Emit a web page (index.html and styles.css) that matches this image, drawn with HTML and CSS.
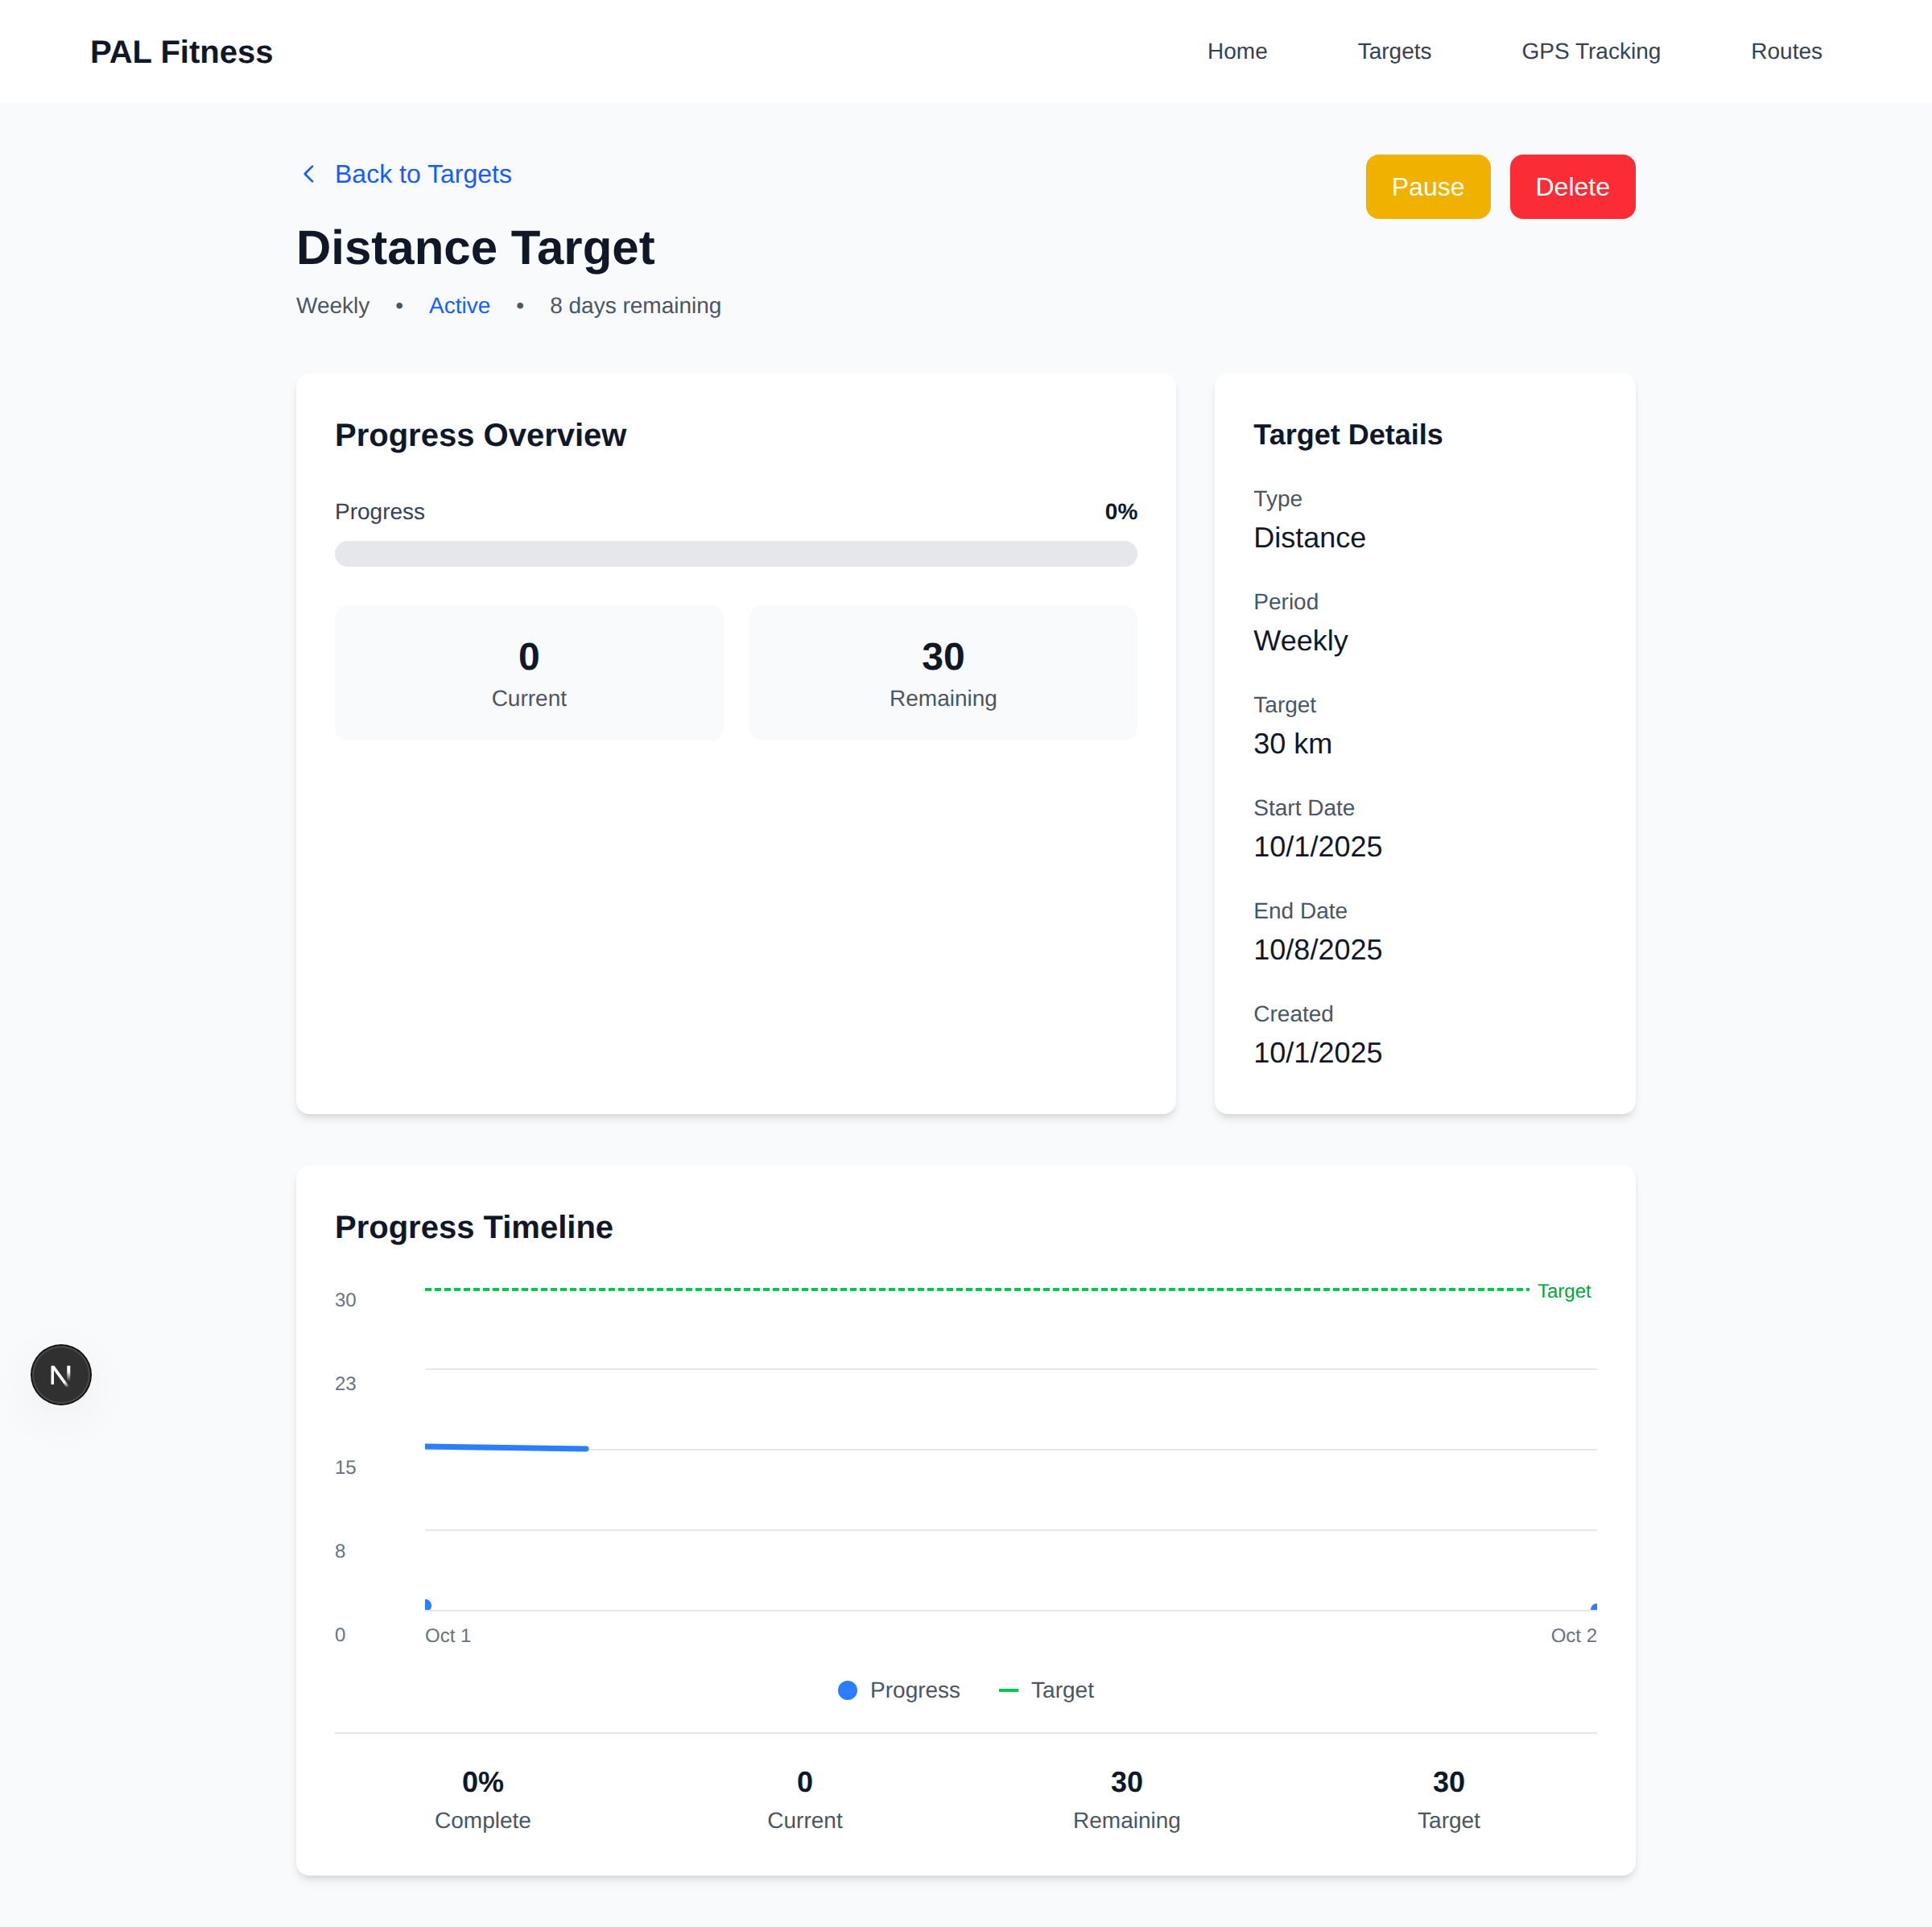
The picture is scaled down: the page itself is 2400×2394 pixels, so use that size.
FILE: index.html
```html
<!DOCTYPE html>
<html lang="en">
<head>
<meta charset="utf-8">
<title>PAL Fitness</title>
<link rel="stylesheet" href="styles.css">
</head>
<body>
<nav class="nav">
  <div class="logo">PAL Fitness</div>
  <div class="nav-links">
    <a class="nav-link">Home</a>
    <a class="nav-link">Targets</a>
    <a class="nav-link">GPS Tracking</a>
    <a class="nav-link">Routes</a>
  </div>
</nav>
<main class="main">
  <header class="page-head">
    <div>
      <a class="back">
        <svg class="back-icon" viewBox="0 0 24 24" fill="none" stroke="currentColor" stroke-width="2" stroke-linecap="round" stroke-linejoin="round"><path d="M15 19l-7-7 7-7"/></svg>
        <span>Back to Targets</span>
      </a>
      <h1 class="title">Distance Target</h1>
      <div class="meta">
        <span>Weekly</span><span>•</span><span class="meta-active">Active</span><span>•</span><span>8 days remaining</span>
      </div>
    </div>
    <div class="actions">
      <button class="btn btn-pause">Pause</button>
      <button class="btn btn-delete">Delete</button>
    </div>
  </header>

  <div class="top-grid">
    <section class="card card-wide">
      <h2 class="card-title">Progress Overview</h2>
      <div class="progress-row">
        <span class="progress-label">Progress</span>
        <span class="progress-value">0%</span>
      </div>
      <div class="bar"></div>
      <div class="boxes">
        <div class="box"><div class="box-value">0</div><div class="box-label">Current</div></div>
        <div class="box"><div class="box-value">30</div><div class="box-label">Remaining</div></div>
      </div>
    </section>
    <aside class="card">
      <h2 class="card-title card-title-sm">Target Details</h2>
      <dl class="details">
        <div><dt>Type</dt><dd>Distance</dd></div>
        <div><dt>Period</dt><dd>Weekly</dd></div>
        <div><dt>Target</dt><dd>30 km</dd></div>
        <div><dt>Start Date</dt><dd>10/1/2025</dd></div>
        <div><dt>End Date</dt><dd>10/8/2025</dd></div>
        <div><dt>Created</dt><dd>10/1/2025</dd></div>
      </dl>
    </aside>
  </div>

  <section class="card timeline">
    <h2 class="card-title">Progress Timeline</h2>
    <div class="chart">
      <div class="y-axis"><span>30</span><span>23</span><span>15</span><span>8</span><span>0</span></div>
      <div class="plot">
        <svg class="plot-svg" width="1456" height="432" viewBox="0 0 1456 432">
          <g stroke="#e5e7eb" stroke-width="2">
            <line x1="0" y1="18" x2="1372" y2="18"/>
            <line x1="0" y1="117" x2="1456" y2="117"/>
            <line x1="0" y1="217" x2="1456" y2="217"/>
            <line x1="0" y1="317" x2="1456" y2="317"/>
            <line x1="0" y1="417" x2="1456" y2="417"/>
          </g>
          <line x1="0" y1="18" x2="1372" y2="18" stroke="#00c950" stroke-width="4" stroke-dasharray="8 4"/>
          <text class="target-tag" x="1382" y="28">Target</text>
          <path d="M0 213L200 216" stroke="#2b7fff" stroke-width="7" stroke-linecap="round" fill="none"/>
          <path d="M0 402.700A8 8 0 0 1 6 416H0Z" fill="#2b7fff"/>
          <path d="M1456 408A8 8 0 0 0 1448 416H1456Z" fill="#2b7fff"/>
        </svg>
        <div class="x-axis"><span>Oct 1</span><span>Oct 2</span></div>
      </div>
    </div>
    <div class="legend">
      <div class="legend-item"><span class="legend-dot"></span><span>Progress</span></div>
      <div class="legend-item"><span class="legend-line"></span><span>Target</span></div>
    </div>
    <div class="summary">
      <div class="summary-item"><div class="summary-value">0%</div><div class="summary-label">Complete</div></div>
      <div class="summary-item"><div class="summary-value">0</div><div class="summary-label">Current</div></div>
      <div class="summary-item"><div class="summary-value">30</div><div class="summary-label">Remaining</div></div>
      <div class="summary-item"><div class="summary-value">30</div><div class="summary-label">Target</div></div>
    </div>
  </section>
</main>
<div class="dev-badge">
  <svg width="36" height="36" viewBox="0 0 36 36" fill="none">
    <defs>
      <linearGradient id="nDiag" x1="6" y1="7" x2="28" y2="33" gradientUnits="userSpaceOnUse">
        <stop offset="0" stop-color="#fff"/><stop offset=".75" stop-color="#fff"/><stop offset="1" stop-color="#fff" stop-opacity="0"/>
      </linearGradient>
      <linearGradient id="nStem" x1="27" y1="7" x2="27" y2="26" gradientUnits="userSpaceOnUse">
        <stop offset="0" stop-color="#fff"/><stop offset=".35" stop-color="#fff"/><stop offset="1" stop-color="#fff" stop-opacity="0"/>
      </linearGradient>
    </defs>
    <path d="M5.500 6.700H9.500L28.500 33H24L9 12.500V30H5.500Z" fill="url(#nDiag)"/>
    <rect x="25.300" y="6.700" width="4" height="19.300" fill="url(#nStem)"/>
  </svg>
</div>
</body>
</html>
```
FILE: styles.css
```css
* { box-sizing: border-box; }
html, body { margin: 0; padding: 0; }
body {
  background: #f9fafb;
  color: #101828;
  font-family: "Liberation Sans", Arial, sans-serif;
  min-height: 2394px;
  position: relative;
  text-rendering: geometricPrecision;
}
h1, h2, dl, dd { margin: 0; }

.nav {
  height: 128px;
  background: #fff;
  display: flex;
  align-items: center;
  justify-content: space-between;
  padding: 0 136px 0 112px;
}
.logo { font-size: 40px; line-height: 56px; font-weight: 700; padding-top: 2px; }
.nav-links { display: flex; gap: 112px; }
.nav-link { font-size: 28px; line-height: 40px; color: #364153; }

.main { width: 1664px; margin: 0 auto; padding: 64px 0; }

.page-head { display: flex; justify-content: space-between; align-items: flex-start; margin-bottom: 64px; }
.back { display: flex; align-items: center; gap: 16px; font-size: 32px; line-height: 48px; color: #155dfc; }
.back-icon { width: 32px; height: 32px; }
.title { font-size: 60px; line-height: 72px; font-weight: 700; margin-top: 32px; }
.meta { display: flex; gap: 32px; font-size: 28px; line-height: 40px; color: #4a5565; margin-top: 16px; }
.meta-active { color: #155dfc; }
.actions { display: flex; gap: 24px; }
.btn {
  border: 0;
  border-radius: 16px;
  color: #fff;
  font: 400 32px/48px "Liberation Sans", Arial, sans-serif;
  padding: 16px 32px;
}
.btn-pause { background: #f0b100; }
.btn-delete { background: #fb2c36; }

.card {
  background: #fff;
  border-radius: 16px;
  padding: 48px;
  box-shadow: 0 8px 12px -2px rgba(0,0,0,.1), 0 4px 8px -4px rgba(0,0,0,.1);
}
.top-grid { display: grid; grid-template-columns: repeat(3, minmax(0, 1fr)); gap: 48px; }
.card-wide { grid-column: span 2; }
.card-title { font-size: 40px; line-height: 56px; font-weight: 700; padding-top: 1px; margin-bottom: -1px; }
.card-title-sm { font-size: 36px; padding-top: 0; margin-bottom: 0; }

.progress-row { display: flex; justify-content: space-between; margin-top: 48px; font-size: 28px; line-height: 40px; }
.progress-label { color: #364153; }
.progress-value { font-weight: 700; }
.bar { height: 32px; border-radius: 16px; background: #e5e7eb; margin-top: 16px; }
.boxes { display: grid; grid-template-columns: 1fr 1fr; gap: 32px; margin-top: 48px; }
.box { background: #f9fafb; border-radius: 16px; padding: 32px; text-align: center; }
.box-value { font-size: 48px; line-height: 64px; font-weight: 700; padding-top: 1px; margin-bottom: -1px; }
.box-label { font-size: 28px; line-height: 40px; color: #4a5565; }

.details { display: flex; flex-direction: column; gap: 32px; margin-top: 32px; }
.details dt { font-size: 28px; line-height: 40px; color: #4a5565; }
.details dd { font-size: 36px; line-height: 56px; }

.timeline { margin-top: 64px; }
.chart { display: flex; height: 480px; margin-top: 32px; }
.y-axis {
  width: 112px;
  display: flex;
  flex-direction: column;
  justify-content: space-between;
  padding: 16px 0;
  font-size: 24px;
  line-height: 32px;
  color: #6a7282;
}
.plot { flex: 1; min-width: 0; }
.plot-svg { display: block; }
.target-tag { font-size: 24px; fill: #00a63e; font-family: "Liberation Sans", Arial, sans-serif; }
.x-axis { display: flex; justify-content: space-between; padding-top: 1px; font-size: 24px; line-height: 32px; color: #6a7282; }

.legend { display: flex; justify-content: center; gap: 48px; margin-top: 16px; font-size: 28px; line-height: 40px; color: #4a5565; }
.legend-item { display: flex; align-items: center; gap: 16px; }
.legend-dot { width: 24px; height: 24px; border-radius: 50%; background: #2b7fff; }
.legend-line { width: 24px; height: 4px; background: #00c950; }

.summary {
  display: grid;
  grid-template-columns: repeat(4, 1fr);
  gap: 32px;
  margin-top: 32px;
  padding-top: 32px;
  border-top: 2px solid #e5e7eb;
  text-align: center;
}
.summary-value { font-size: 36px; line-height: 56px; font-weight: 700; }
.summary-label { font-size: 28px; line-height: 40px; color: #4a5565; }

.dev-badge {
  position: absolute;
  left: 40px;
  top: 1672px;
  width: 72px;
  height: 72px;
  border-radius: 50%;
  background: #303030;
  display: flex;
  align-items: center;
  justify-content: center;
  box-shadow: 0 0 0 2px #111, inset 0 0 0 2px #4a4a4a, 0 16px 64px rgba(0,0,0,.06);
}
```
